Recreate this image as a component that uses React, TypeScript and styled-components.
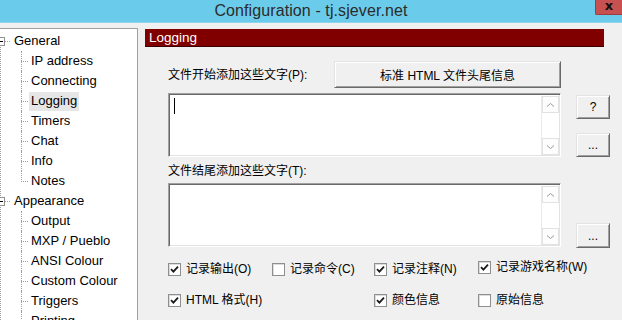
import styled, { createGlobalStyle } from "styled-components";

const GlobalStyle = createGlobalStyle`
  html, body {
    margin: 0;
    padding: 0;
    background: #f0f0f0;
    overflow: hidden;
  }
  body {
    font-family: "Liberation Sans", "Noto Sans CJK SC", sans-serif;
    color: #000;
  }
`;

const generalItems = ["IP address", "Connecting", "Logging", "Timers", "Chat", "Info", "Notes"];
const appearanceItems = ["Output", "MXP / Pueblo", "ANSI Colour", "Custom Colour", "Triggers", "Printing"];

const options = [
  { label: "记录输出(O)", checked: true },
  { label: "记录命令(C)", checked: false },
  { label: "记录注释(N)", checked: true },
  { label: "记录游戏名称(W)", checked: true, lift: true },
  { label: "HTML 格式(H)", checked: true },
  null,
  { label: "颜色信息", checked: true },
  { label: "原始信息", checked: false },
];

const Check = () => (
  <svg width="9" height="9" viewBox="0 0 9 9">
    <path d="M1 4.2 L3.4 6.6 L8 1.6" fill="none" stroke="#1a1a1a" strokeWidth="1.8" />
  </svg>
);

const Chevron = ({ down }: { down?: boolean }) => (
  <svg width="9" height="6" viewBox="0 0 9 6">
    <path
      d={down ? "M1 1.5 L4.5 4.5 L8 1.5" : "M1 4.5 L4.5 1.5 L8 4.5"}
      fill="none"
      stroke="#9a9a9a"
      strokeWidth="1"
    />
  </svg>
);

const Editor = ({ caret }: { caret?: boolean }) => (
  <TextBox>
    <TextArea>{caret && <Caret />}</TextArea>
    <ScrollBar>
      <ArrowButton>
        <Chevron />
      </ArrowButton>
      <ArrowButton>
        <Chevron down />
      </ArrowButton>
    </ScrollBar>
  </TextBox>
);

const App = () => {
  return (
    <Window>
      <GlobalStyle />
      <TitleBar>
        <Title>Configuration - tj.sjever.net</Title>
        <CloseButton>x</CloseButton>
      </TitleBar>
      <Main>
        <TreePanel>
          <TreeList>
            <RootRow>
              <Expander />
              <RootLink />
              <NodeLabel>General</NodeLabel>
            </RootRow>
            {generalItems.map((item, index) => (
              <ChildRow key={`g-${item}`}>
                <Branch $last={index === generalItems.length - 1} />
                <NodeLabel $selected={item === "Logging"}>{item}</NodeLabel>
              </ChildRow>
            ))}
            <RootRow>
              <Expander />
              <RootLink />
              <NodeLabel>Appearance</NodeLabel>
            </RootRow>
            {appearanceItems.map((item) => (
              <ChildRow key={`a-${item}`}>
                <Branch />
                <NodeLabel>{item}</NodeLabel>
              </ChildRow>
            ))}
          </TreeList>
        </TreePanel>

        <Content>
          <SectionHeader>Logging</SectionHeader>
          <EditorGrid>
            <LabelRow>
              <FieldLabel>文件开始添加这些文字(P):</FieldLabel>
              <PushButton $width={227} $height={27}>
                标准 HTML 文件头尾信息
              </PushButton>
            </LabelRow>
            <span />
            <Editor caret />
            <SideButtons>
              <PushButton $width={34} $height={24} $top={2}>
                ?
              </PushButton>
              <PushButton $width={34} $height={24}>
                ...
              </PushButton>
            </SideButtons>
            <FieldLabel $spaced>文件结尾添加这些文字(T):</FieldLabel>
            <span />
            <Editor />
            <SideButtons $end>
              <PushButton $width={34} $height={25} $bottom={-1}>
                ...
              </PushButton>
            </SideButtons>
          </EditorGrid>
          <OptionGrid>
            {options.map((opt, i) =>
              opt ? (
                <Option key={opt.label} $lift={opt.lift}>
                  <Box>{opt.checked && <Check />}</Box>
                  <span>{opt.label}</span>
                </Option>
              ) : (
                <span key={`empty-${i}`} />
              )
            )}
          </OptionGrid>
        </Content>
      </Main>
    </Window>
  );
};

const Window = styled.div`
  width: 622px;
  height: 320px;
  overflow: hidden;
  display: flex;
  flex-direction: column;
  background: #f0f0f0;
`;

const TitleBar = styled.div`
  height: 22px;
  flex-shrink: 0;
  position: relative;
  display: flex;
  align-items: center;
  justify-content: center;
  background: #6bcbea;
  border-bottom: 1px solid #8fd5ee;
`;

const Title = styled.div`
  font-size: 16px;
  color: #2b2b2b;
  margin-top: -1px;
  letter-spacing: 0.1px;
`;

const CloseButton = styled.div`
  position: absolute;
  top: 0;
  right: 0;
  width: 26px;
  height: 14px;
  background: #c75050;
  border-left: 1px solid #9c3f3f;
  border-bottom: 1px solid #9c3f3f;
  border-bottom-left-radius: 2px;
  color: #111;
  font: bold 13px/11px "DejaVu Sans", sans-serif;
  text-align: center;
`;

const Main = styled.div`
  flex: 1;
  display: flex;
  padding-top: 5px;
  min-height: 0;
`;

const TreePanel = styled.div`
  width: 143px;
  margin-left: -6px;
  flex-shrink: 0;
  background: #fff;
  border-top: 1px solid #a0a0a0;
  border-right: 1px solid #a0a0a0;
  box-shadow: inset 0 1px 0 #696969;
  overflow: hidden;
  font-size: 13px;
`;

const TreeList = styled.div`
  padding-top: 2px;
  background:
    linear-gradient(#fff, #fff) 0 0 / 100% 12px no-repeat,
    linear-gradient(to bottom, #a0a0a0 50%, transparent 50%) 6px 0 / 1px 2px repeat-y;
`;

const RootRow = styled.div`
  height: 20px;
  display: flex;
  align-items: center;
  padding-left: 2px;
`;

const Expander = styled.span`
  position: relative;
  width: 7px;
  height: 7px;
  border: 1px solid #919191;
  background: #fff;
  &::after {
    content: "";
    position: absolute;
    left: 1px;
    top: 3px;
    width: 5px;
    height: 1px;
    background: #000;
  }
`;

const RootLink = styled.span`
  width: 5px;
  height: 1px;
  margin-right: 2px;
  background: linear-gradient(to right, #a0a0a0 50%, transparent 50%) 0 0 / 2px 1px repeat-x;
`;

const ChildRow = styled.div`
  height: 20px;
  display: flex;
  align-items: center;
  padding-left: 27px;
`;

const Branch = styled.span<{ $last?: boolean }>`
  align-self: flex-start;
  width: 7px;
  height: ${(p) => (p.$last ? "11px" : "20px")};
  border-left: 1px dotted #a0a0a0;
  background: linear-gradient(to right, #a0a0a0 50%, transparent 50%) 1px 10px / 2px 1px repeat-x;
`;

const NodeLabel = styled.span<{ $selected?: boolean }>`
  padding: 1px 2px 2px;
  line-height: 16px;
  white-space: nowrap;
  background: ${(p) => (p.$selected ? "#e6e6e6" : "transparent")};
`;

const Content = styled.div`
  flex: 1;
  min-width: 0;
  margin: 1px 18px 0 7px;
  display: flex;
  flex-direction: column;
  font-size: 12px;
`;

const SectionHeader = styled.div`
  height: 17px;
  background: #800000;
  border-bottom: 1px solid #3a0000;
  color: #fff;
  font-size: 13.5px;
  line-height: 17px;
  padding-left: 4px;
`;

const EditorGrid = styled.div`
  display: grid;
  grid-template-columns: 393px 34px;
  column-gap: 15px;
  padding-left: 23px;
  margin-top: 14px;
`;

const LabelRow = styled.div`
  display: flex;
  align-items: center;
  justify-content: space-between;
  margin-bottom: 5px;
`;

const FieldLabel = styled.div<{ $spaced?: boolean }>`
  line-height: 16px;
  white-space: nowrap;
  margin: ${(p) => (p.$spaced ? "6px 0 4px" : "0")};
`;

const PushButton = styled.div<{ $width: number; $height: number; $top?: number; $bottom?: number }>`
  box-sizing: border-box;
  width: ${(p) => p.$width}px;
  height: ${(p) => p.$height}px;
  margin-top: ${(p) => p.$top ?? 0}px;
  margin-bottom: ${(p) => p.$bottom ?? 0}px;
  display: flex;
  align-items: center;
  justify-content: center;
  background: #f0f0f0;
  border: 1px solid;
  border-color: #e3e3e3 #696969 #696969 #e3e3e3;
  box-shadow: inset 1px 1px #fff, inset -1px -1px #a0a0a0;
  font-size: 12px;
  white-space: nowrap;
`;

const SideButtons = styled.div<{ $end?: boolean }>`
  display: flex;
  flex-direction: column;
  justify-content: ${(p) => (p.$end ? "flex-end" : "space-between")};
`;

const TextBox = styled.div`
  box-sizing: border-box;
  height: 64px;
  display: flex;
  background: #fff;
  border: 1px solid;
  border-color: #a0a0a0 #fff #fff #a0a0a0;
  box-shadow: inset 1px 1px #696969, inset -1px -1px #e3e3e3;
  padding: 2px 1px 1px 2px;
`;

const TextArea = styled.div`
  flex: 1;
  padding: 2px 0 0 3px;
`;

const Caret = styled.div`
  width: 1px;
  height: 16px;
  background: #000;
`;

const ScrollBar = styled.div`
  width: 17px;
  display: flex;
  flex-direction: column;
  justify-content: space-between;
  background: #fff;
  border-left: 1px solid #eaeaea;
`;

const ArrowButton = styled.div`
  box-sizing: border-box;
  height: 17px;
  display: flex;
  align-items: center;
  justify-content: center;
  border: 1px solid #e2e2e2;
  background: #fdfdfd;
`;

const OptionGrid = styled.div`
  display: grid;
  grid-template-columns: 104px 102px 104px auto;
  row-gap: 15px;
  padding-left: 23px;
  margin-top: 14px;
`;

const Option = styled.div<{ $lift?: boolean }>`
  display: flex;
  align-items: center;
  gap: 5px;
  height: 16px;
  line-height: 16px;
  white-space: nowrap;
  position: relative;
  top: ${(p) => (p.$lift ? "-2px" : "0")};
`;

const Box = styled.span`
  box-sizing: border-box;
  width: 13px;
  height: 13px;
  display: flex;
  align-items: center;
  justify-content: center;
  background: #fff;
  border: 1px solid #8e8f8f;
  box-shadow: inset 1px 1px #dcdcdc;
`;

export default App;
